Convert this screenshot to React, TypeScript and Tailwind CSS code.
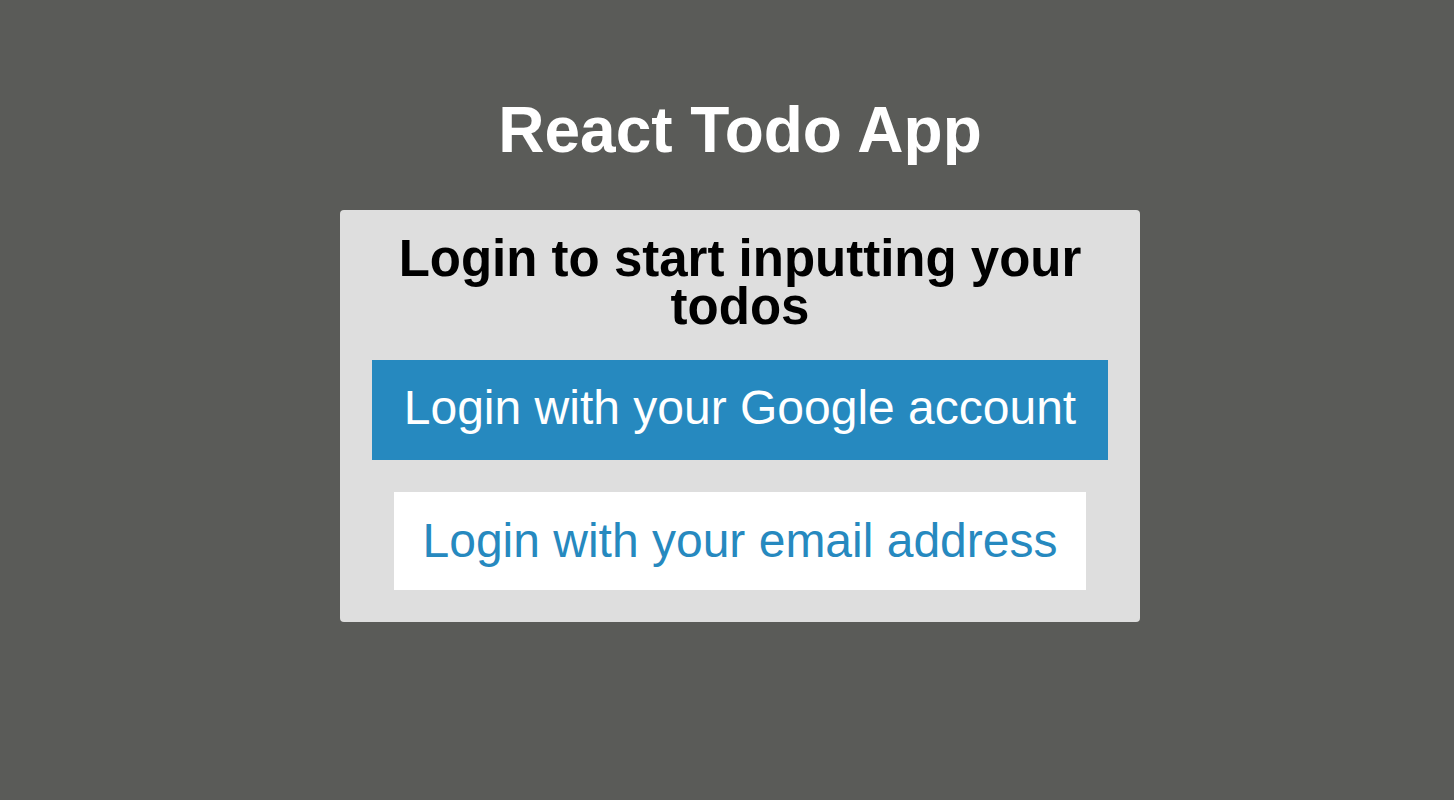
export default function App() {
  return (
    <div className="min-h-screen w-full bg-[#5a5b58] pl-[26px] flex flex-col items-center font-['Liberation_Sans',Arial,sans-serif]">
      <h1 className="mt-[94px] text-[64px] leading-[72px] font-bold text-white">React Todo App</h1>
      <div className="mt-[44px] w-[800px] rounded bg-[#dedede] flex flex-col items-center pt-[25px] pb-[32px]">
        <h2 className="text-[51px] leading-[48px] font-bold text-black text-center px-[20px]">
          Login to start inputting your todos
        </h2>
        <button className="mt-[29px] w-[736px] pt-[20px] pb-[24px] text-[48px] leading-[56px] bg-[#2689bf] text-white">
          Login with your Google account
        </button>
        <button className="mt-[32px] w-[692px] pt-[21px] pb-[21px] text-[48px] leading-[56px] bg-white text-[#2689bf]">
          Login with your email address
        </button>
      </div>
    </div>
  )
}
